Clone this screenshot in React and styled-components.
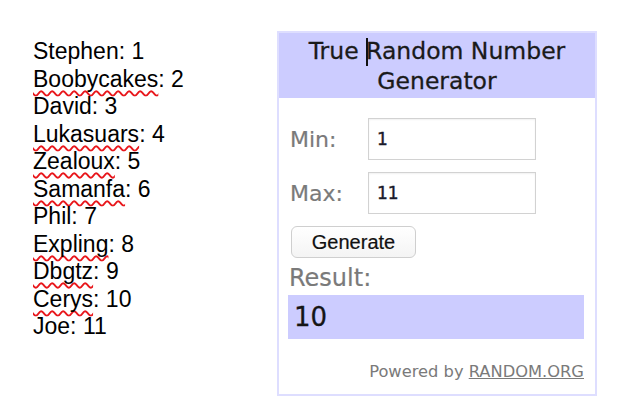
import React from "react";
import styled, { createGlobalStyle } from "styled-components";

const GlobalStyle = createGlobalStyle`
  html, body {
    margin: 0;
    padding: 0;
    background: #ffffff;
  }
`;

const Page = styled.div`
  display: flex;
  align-items: flex-start;
  width: 630px;
  height: 406px;
  padding-left: 33px;
  box-sizing: border-box;
  background: #fff;
`;

const NameList = styled.ul`
  flex: 0 0 244px;
  list-style: none;
  margin: 0;
  padding: 38px 0 0;
  font-family: "Liberation Sans", Arial, sans-serif;
  font-size: 23px;
  line-height: 27.5px;
  color: #000;
`;

const Name = styled.span`
  text-decoration: ${(p) => (p.$misspelled ? "underline wavy #e8161b" : "none")};
  text-decoration-thickness: 1.5px;
  text-underline-offset: 3px;
  text-decoration-skip-ink: none;
`;

const Widget = styled.div`
  flex: 0 0 320px;
  margin-top: 31px;
  border: 2px solid #dedeff;
  box-sizing: border-box;
  font-family: "DejaVu Sans", Verdana, sans-serif;
  background: #fff;
`;

const Header = styled.div`
  background: #ccccff;
  padding: 3px 4px 2px;
  text-align: center;
  font-size: 23.5px;
  line-height: 30px;
  color: #1a1a1a;
  -webkit-text-stroke: 0.3px #1a1a1a;
`;

const Caret = styled.span`
  display: inline-block;
  width: 0;
  height: 28px;
  border-left: 2px solid #111;
  margin-right: -2px;
  vertical-align: -7px;
`;

const Body = styled.div`
  display: flex;
  flex-direction: column;
  padding: 20px 11px 12px 9px;
`;

const FieldRow = styled.div`
  display: flex;
  align-items: center;
  margin-bottom: 12px;
`;

const Label = styled.span`
  flex: 0 0 80px;
  padding-left: 2px;
  box-sizing: border-box;
  font-size: 22px;
  color: #7a7a7a;
  -webkit-text-stroke: 0.2px #7a7a7a;
`;

const Field = styled.div`
  width: 168px;
  height: 42px;
  box-sizing: border-box;
  border: 1px solid #d2d2d2;
  box-shadow: inset 0 1px 2px rgba(0, 0, 0, 0.06);
  padding-left: 8px;
  display: flex;
  align-items: center;
  font-size: 17px;
  color: #1a1a2a;
  -webkit-text-stroke: 0.4px #1a1a2a;
`;

const Button = styled.button`
  align-self: flex-start;
  margin-left: 3px;
  width: 125px;
  height: 32px;
  border: 1px solid #cfcfcf;
  border-radius: 6px;
  background: linear-gradient(#ffffff, #f4f4f4);
  font-family: "Liberation Sans", Arial, sans-serif;
  font-size: 20px;
  color: #111;
  -webkit-text-stroke: 0.2px #111;
  padding: 0;
`;

const ResultLabel = styled.div`
  margin-top: 7px;
  padding-left: 1px;
  font-size: 24px;
  line-height: 26px;
  color: #7a7a7a;
  -webkit-text-stroke: 0.2px #7a7a7a;
`;

const ResultBox = styled.div`
  margin-top: 4px;
  height: 44px;
  background: #ccccff;
  padding-left: 6px;
  display: flex;
  align-items: center;
  font-size: 26px;
  color: #151515;
  -webkit-text-stroke: 0.3px #151515;
`;

const Powered = styled.div`
  margin-top: 23px;
  text-align: right;
  font-size: 16.3px;
  line-height: 20px;
  color: #7a7a7a;

  a {
    color: #7a7a7a;
    text-decoration: underline;
  }
`;

const people = [
  ["Stephen", false],
  ["Boobycakes", true],
  ["David", false],
  ["Lukasuars", true],
  ["Zealoux", true],
  ["Samanfa", true],
  ["Phil", false],
  ["Expling", true],
  ["Dbgtz", true],
  ["Cerys", true],
  ["Joe", false],
];

export default function App() {
  return (
    <>
      <GlobalStyle />
      <Page>
        <NameList>
          {people.map(([name, bad], i) => (
            <li key={name}>
              <Name $misspelled={bad}>{name}</Name>: {i + 1}
            </li>
          ))}
        </NameList>
        <Widget>
          <Header>
            True <Caret />Random Number
            <br />
            Generator
          </Header>
          <Body>
            <FieldRow>
              <Label>Min:</Label>
              <Field>1</Field>
            </FieldRow>
            <FieldRow>
              <Label>Max:</Label>
              <Field>11</Field>
            </FieldRow>
            <Button>Generate</Button>
            <ResultLabel>Result:</ResultLabel>
            <ResultBox>10</ResultBox>
            <Powered>
              Powered by <a>RANDOM.ORG</a>
            </Powered>
          </Body>
        </Widget>
      </Page>
    </>
  );
}
